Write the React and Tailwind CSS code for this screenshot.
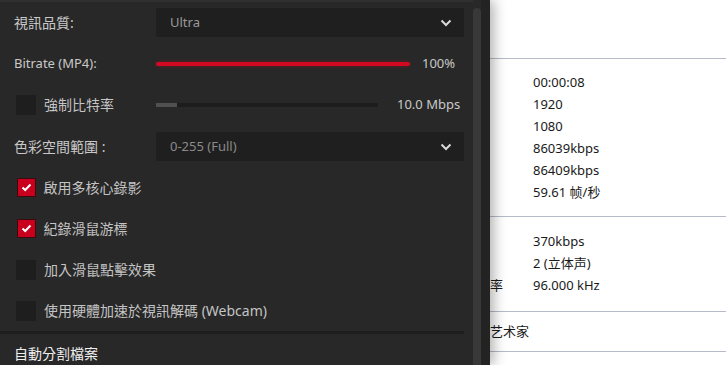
import React from 'react';

const CJK = { fontFamily: '"Noto Sans", "Noto Sans CJK TC", sans-serif' };
const SC = { fontFamily: '"Noto Sans", "Noto Sans CJK SC", sans-serif' };

function Chevron() {
  return (
    <svg width="12" height="8" viewBox="0 0 12 8" className="text-[#d8d8d8]">
      <polyline points="1.5,1.5 6,6 10.5,1.5" fill="none" stroke="currentColor" strokeWidth="2" />
    </svg>
  );
}

function Select({ value, dim }) {
  return (
    <div className="flex-1 h-[29px] bg-[#1f1f1f] flex items-center justify-between pl-[14px] pr-[12px]">
      <span className={`text-[13px] ${dim ? 'text-[#8a8a8a]' : 'text-[#9a9a9a]'}`}>{value}</span>
      <Chevron />
    </div>
  );
}

function Check({ checked, label }) {
  return (
    <div className="h-[41px] flex items-center pl-[16px]">
      {checked ? (
        <div className="w-[19px] h-[19px] ml-[0.5px] bg-[#c8001e] border border-[#3a0a10] flex items-center justify-center">
          <svg width="11" height="9" viewBox="0 0 11 9">
            <polyline points="1.5,4.5 4.2,7 9.5,1.5" fill="none" stroke="#fff" strokeWidth="2" />
          </svg>
        </div>
      ) : (
        <div className="w-5 h-5 bg-[#1e1e1e]" />
      )}
      <span className="ml-[8px] text-[14px] text-[#c4c4c4] whitespace-nowrap">{label}</span>
    </div>
  );
}

function InfoRow({ label, value }) {
  return (
    <div className="h-[22px] flex items-center text-[13px] text-[#1a1a1a] whitespace-nowrap">
      <div className="w-[43px] shrink-0">{label}</div>
      <span>{value}</span>
    </div>
  );
}

export default function App() {
  return (
    <div className="w-[726px] h-[365px] flex overflow-hidden bg-white" style={CJK}>
      <div className="w-[490px] shrink-0 h-full flex bg-[#282828] relative z-10 shadow-[4px_0_12px_rgba(0,0,0,0.3)]">
        <div className="w-[473px] shrink-0">
          <div className="h-[2px] bg-[#303030]" />
          <div className="h-[41px] flex items-center pl-[14px] pr-[9px]">
            <span className="w-[142px] text-[14px] text-[#c8c8c8]">視訊品質:</span>
            <Select value="Ultra" />
          </div>
          <div className="h-[41px] flex items-center pl-[14px]">
            <span className="w-[142px] text-[13px] text-[#c8c8c8]">Bitrate (MP4):</span>
            <div className="w-[254px] h-[4px] rounded-full bg-[#d10a22] shadow-[0_0_4px_rgba(210,10,34,0.35)]" />
            <span className="ml-[12px] text-[13px] text-[#c8c8c8]">100%</span>
          </div>
          <div className="h-[41px] flex items-center pl-[16px]">
            <div className="w-5 h-5 bg-[#1e1e1e]" />
            <span className="ml-[8px] w-[112px] text-[14px] text-[#c4c4c4]">強制比特率</span>
            <div className="w-[222px] h-[4px] bg-[#1d1d1d] flex">
              <div className="w-[21px] h-full bg-[#505050]" />
            </div>
            <span className="ml-[19px] text-[13px] text-[#c8c8c8]">10.0 Mbps</span>
          </div>
          <div className="h-[41px] mt-[1px] flex items-center pl-[14px] pr-[9px]">
            <span className="w-[142px] text-[14px] text-[#c8c8c8] whitespace-nowrap">色彩空間範圍 :</span>
            <Select value="0-255 (Full)" dim />
          </div>
          <div>
            <Check checked label="啟用多核心錄影" />
            <Check checked label="紀錄滑鼠游標" />
            <Check label="加入滑鼠點擊效果" />
            <Check label="使用硬體加速於視訊解碼 (Webcam)" />
          </div>
          <div className="h-[3px] w-[464px] bg-[#1e1e1e]" />
          <div className="h-[38px] flex items-center pl-[14px]">
            <span className="text-[14px] text-[#efefef]">自動分割檔案</span>
          </div>
        </div>
        <div className="w-2 mt-[8px] bg-[#383838] rounded-t-full" />
        <div className="w-[9px] bg-[#232323]" />
      </div>
      <div className="flex-1 flex flex-col overflow-hidden" style={SC}>
        <div className="h-[59px] shrink-0 border-b border-[#b4bcc8]" />
        <div className="shrink-0 pt-[13px] pb-[12px] border-b border-[#b4bcc8]">
          <InfoRow value="00:00:08" />
          <InfoRow value="1920" />
          <InfoRow value="1080" />
          <InfoRow value="86039kbps" />
          <InfoRow value="86409kbps" />
          <InfoRow value="59.61 帧/秒" />
        </div>
        <div className="shrink-0 pt-[14px] pb-[14px] border-b border-[#b4bcc8]">
          <InfoRow value="370kbps" />
          <InfoRow value="2 (立体声)" />
          <InfoRow label="率" value="96.000 kHz" />
        </div>
        <div className="h-[40px] shrink-0 flex items-center border-b border-[#b4bcc8] text-[13px] text-[#1a1a1a]">
          <span>艺术家</span>
        </div>
      </div>
    </div>
  );
}
